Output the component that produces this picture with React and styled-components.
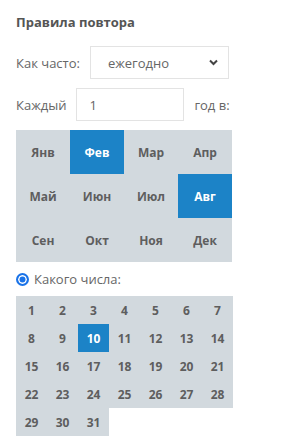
import React, { useState } from 'react';
import styled, { createGlobalStyle } from 'styled-components';

const Global = createGlobalStyle`
  body {
    margin: 0;
    background: #fff;
    font-family: 'Open Sans', 'Liberation Sans', sans-serif;
  }
`;

const Panel = styled.div`
  padding: 11px 16px 0;
  width: 283px;
  box-sizing: border-box;
`;

const Title = styled.h3`
  margin: 0;
  font-size: 13px;
  line-height: 22px;
  font-weight: 700;
  color: #555;
`;

const Row = styled.div`
  display: flex;
  align-items: center;
  gap: ${p => p.gap || 10}px;
  margin-top: ${p => p.top}px;
`;

const Label = styled.span`
  font-size: 13px;
  color: #666;
`;

const SelectWrap = styled.div`
  position: relative;
  width: 139px;
  height: 33px;
`;

const Select = styled.select`
  appearance: none;
  width: 100%;
  height: 100%;
  border: 1px solid #e3e3e3;
  background: #fff;
  font-family: inherit;
  font-size: 13px;
  color: #666;
  padding: 0 0 0 17px;
  outline: none;
`;

const Chevron = styled.svg`
  position: absolute;
  right: 11px;
  top: 13px;
  pointer-events: none;
`;

const Input = styled.input`
  width: 108px;
  height: 33px;
  box-sizing: border-box;
  border: 1px solid #e3e3e3;
  font-family: inherit;
  font-size: 13px;
  color: #666;
  padding: 0 12px;
  outline: none;
`;

const Grid = styled.div`
  display: grid;
  grid-template-columns: repeat(${p => p.cols}, ${p => p.w}px);
  grid-auto-rows: ${p => p.h}px;
  margin-top: ${p => p.top || 0}px;
  width: max-content;
`;

const Cell = styled.div`
  display: flex;
  align-items: center;
  justify-content: center;
  background: ${p => (p.active ? '#1c83c7' : '#d2d9de')};
  color: ${p => (p.active ? '#fff' : '#5e5e5e')};
  font-size: 12px;
  font-weight: 700;
`;

const RadioRow = styled.label`
  display: flex;
  align-items: center;
  gap: 5px;
  height: 34px;
  font-size: 13px;
  color: #666;
`;

const Radio = styled.span`
  width: 13px;
  height: 13px;
  box-sizing: border-box;
  border-radius: 50%;
  background: #1a73e8;
  border: 2px solid #1a73e8;
  box-shadow: inset 0 0 0 1.5px #fff;
`;

const months = ['Янв', 'Фев', 'Мар', 'Апр', 'Май', 'Июн', 'Июл', 'Авг', 'Сен', 'Окт', 'Ноя', 'Дек'];
const days = Array.from({ length: 31 }, (_, i) => i + 1);

export default function App() {
  const [sel] = useState(['Фев', 'Авг']);
  return (
    <Panel>
      <Global />
      <Title>Правила повтора</Title>
      <Row top={13}>
        <Label>Как часто:</Label>
        <SelectWrap>
          <Select defaultValue="y">
            <option value="y">ежегодно</option>
          </Select>
          <Chevron width="9" height="7" viewBox="0 0 9 7">
            <path d="M1 1.5 L4.5 5 L8 1.5" fill="none" stroke="#444" strokeWidth="2" />
          </Chevron>
        </SelectWrap>
      </Row>
      <Row top={9}>
        <Label>Каждый</Label>
        <Input defaultValue="1" />
        <Label>год в:</Label>
      </Row>
      <Grid cols={4} w={54} h={44} top={9}>
        {months.map(m => (
          <Cell key={m} active={sel.includes(m)}>{m}</Cell>
        ))}
      </Grid>
      <RadioRow>
        <Radio />
        Какого числа:
      </RadioRow>
      <Grid cols={7} w={31} h={28}>
        {days.map(d => (
          <Cell key={d} active={d === 10}>{d}</Cell>
        ))}
      </Grid>
    </Panel>
  );
}
